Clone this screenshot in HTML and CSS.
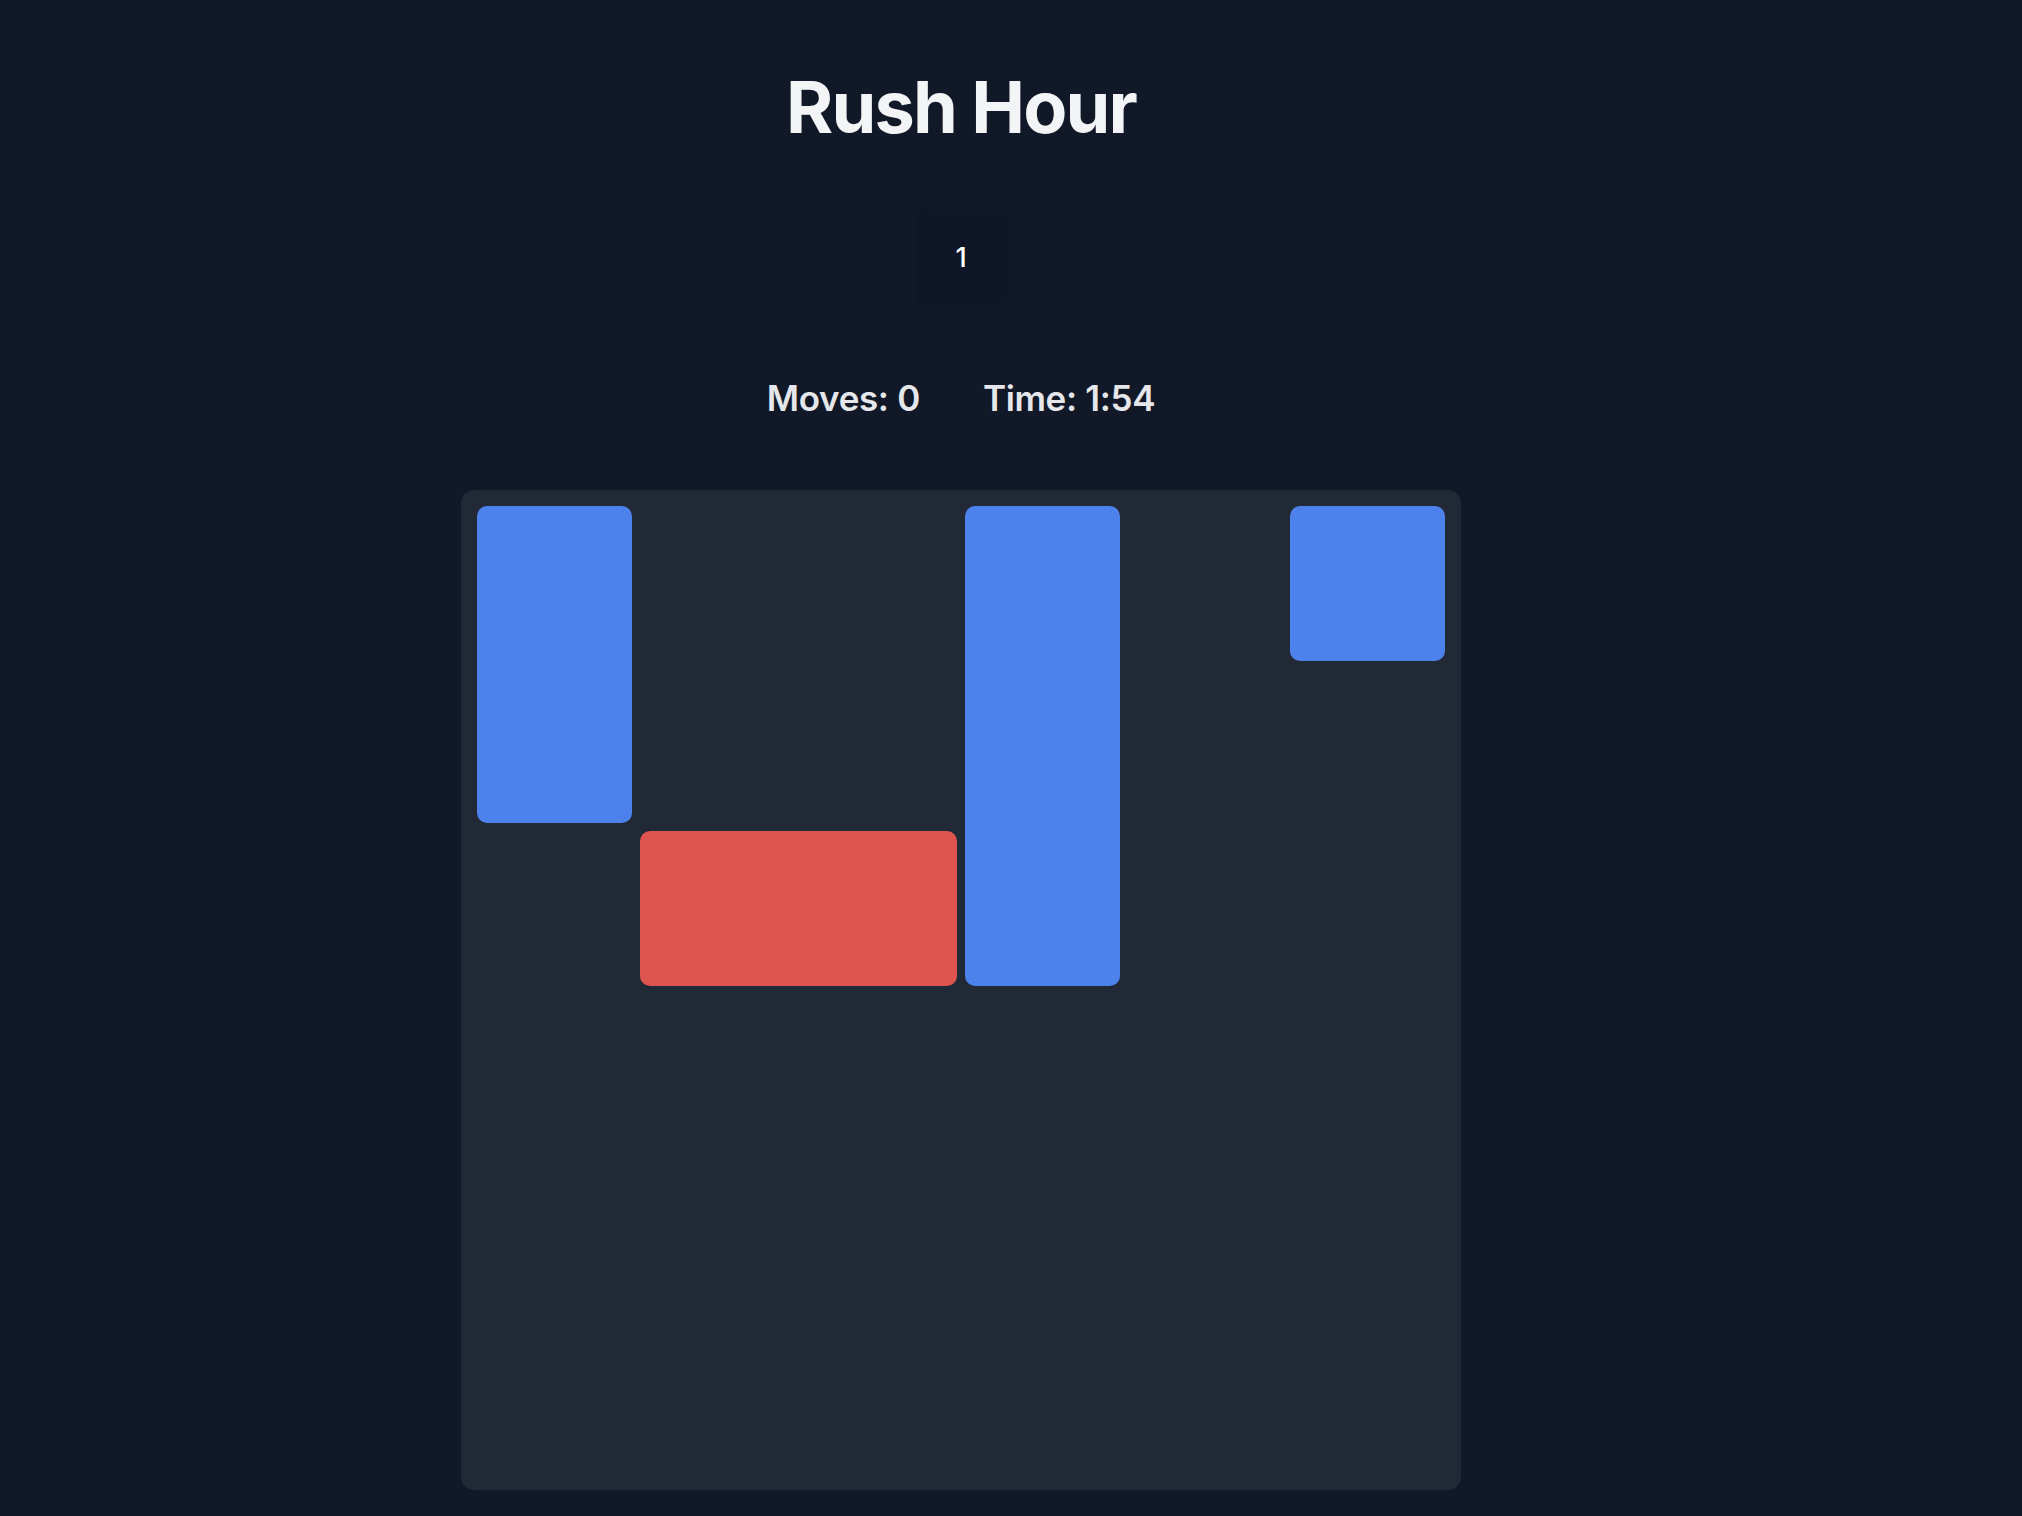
FILE: index.html
```html
<!DOCTYPE html>
<html>
<head>
<meta charset="utf-8">
<link rel="stylesheet" href="styles.css">
</head>
<body>
<div class="app">
  <h1 class="title">Rush Hour</h1>
  <div class="levels">
    <button class="level-btn">1</button>
  </div>
  <div class="stats">
    <span class="stat">Moves: 0</span>
    <span class="stat">Time: 1:54</span>
  </div>
  <div class="board">
    <div class="car blue c1"></div>
    <div class="car blue c2"></div>
    <div class="car blue c3"></div>
    <div class="car red c4"></div>
  </div>
</div>
</body>
</html>
```
FILE: styles.css
```css
html, body {
  margin: 0;
  padding: 0;
  background: #111827;
}
body {
  font-family: Inter, "Noto Sans", sans-serif;
  color: #f3f4f6;
}
.app {
  width: 1922px;
  display: flex;
  flex-direction: column;
  align-items: center;
  padding-top: 71px;
}
.title {
  margin: 0;
  font-size: 72px;
  line-height: 1;
  font-weight: 700;
  letter-spacing: -0.025em;
  color: #f3f4f6;
}
.levels {
  margin-top: 66px;
  display: flex;
  gap: 12px;
}
.level-btn {
  width: 93px;
  height: 96px;
  border: none;
  border-radius: 12px;
  background: #0f1628;
  color: #ffffff;
  font-family: Inter, "Noto Sans", sans-serif;
  font-size: 27px;
  font-weight: 500;
  display: flex;
  align-items: center;
  justify-content: center;
  padding: 0;
}
.stats {
  margin-top: 75px;
  display: flex;
  gap: 63px;
  font-size: 35px;
  line-height: 36px;
  font-weight: 600;
  letter-spacing: -0.01em;
  color: #e5e7eb;
}
.board {
  margin-top: 74px;
  width: 1000px;
  height: 1000px;
  box-sizing: border-box;
  padding: 16px;
  background: #212836;
  border-radius: 13px;
  display: grid;
  grid-template-columns: repeat(6, 1fr);
  grid-template-rows: repeat(6, 1fr);
  gap: 8px;
}
.car {
  border-radius: 10px;
}
.blue { background: #4d82ed; }
.red { background: #dd534e; }
.c1 { grid-column: 1; grid-row: 1 / span 2; }
.c2 { grid-column: 4; grid-row: 1 / span 3; }
.c3 { grid-column: 6; grid-row: 1; }
.c4 { grid-column: 2 / span 2; grid-row: 3; }
```
